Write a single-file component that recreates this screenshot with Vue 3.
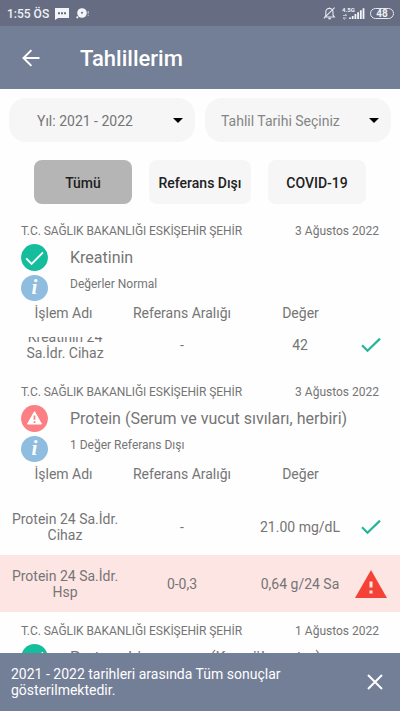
<script setup>
import { ref } from 'vue'

const tabs = ['Tümü', 'Referans Dışı', 'COVID-19']
const activeTab = ref('Tümü')
const showNotice = ref(true)

const source = 'T.C. SAĞLIK BAKANLIĞI ESKİŞEHİR ŞEHİR'

const results = [
  {
    id: 1,
    date: '3 Ağustos 2022',
    title: 'Kreatinin',
    summary: 'Değerler Normal',
    normal: true,
    compact: true,
    rows: [{ name: 'Kreatinin 24 Sa.İdr. Cihaz', range: '-', value: '42', normal: true }],
  },
  {
    id: 2,
    date: '3 Ağustos 2022',
    title: 'Protein (Serum ve vucut sıvıları, herbiri)',
    summary: '1 Değer Referans Dışı',
    normal: false,
    rows: [
      { name: 'Protein 24 Sa.İdr. Cihaz', range: '-', value: '21.00 mg/dL', normal: true },
      { name: 'Protein 24 Sa.İdr. Hsp', range: '0-0,3', value: '0,64 g/24 Sa', normal: false },
    ],
  },
  {
    id: 3,
    date: '1 Ağustos 2022',
    title: 'Protrombin zamanı (Koagülometre)',
    normal: true,
  },
]
</script>

<template>
  <div class="screen">
    <div class="status-bar">
      <span class="clock">1:55 ÖS</span>
      <svg class="chat-icon" viewBox="0 0 14 12">
        <path d="M0 0h14v10H3l-3 2z" fill="#f4f5f8" />
        <path d="M3 4.2h2v2H3zM6 4.2h2v2H6zM9 4.2h2v2H9z" fill="#666d82" />
      </svg>
      <svg class="bubble-icon" viewBox="0 0 14 12">
        <circle cx="6" cy="5" r="4.8" fill="#f4f5f8" />
        <circle cx="1.3" cy="9.3" r="1.1" fill="#f4f5f8" />
        <circle cx="6" cy="4.8" r="1" fill="#666d82" />
        <path d="M12.2 3v3M12.2 7v1" stroke="#c5c9d4" />
      </svg>
      <span class="spacer"></span>
      <svg class="bell-icon" viewBox="0 0 13 13" fill="none" stroke="#e6e8ee" stroke-width="1.1">
        <path d="M2 10h9.4L10 8.2V5a3.6 3.6 0 0 0-7.2 0v3.2zM6.5 1.5V.4M.8 11.4 11.6.6" />
        <path d="M5.3 11.5h2.6" stroke-width="1.6" />
      </svg>
      <div class="network">
        <span class="network-type">4.5G</span>
        <svg class="signal-icon" viewBox="0 0 23 13">
          <path d="M1 8.5h3.5M1 11h3.5M3 7l2 1.5M3 12.5 1 11" stroke="#d3d7e0" stroke-width=".8" fill="none" />
          <path
            d="M8 10.5V12M10.7 9v3M13.4 7v5M16.1 5.2V12M18.8 3.2V12M21.5 1.2V12"
            stroke="#f4f5f8"
            stroke-width="1.8"
          />
        </svg>
      </div>
      <div class="battery"><span>48</span></div>
    </div>

    <header class="app-bar">
      <svg class="back-icon" viewBox="0 0 18 18" fill="none" stroke="#fff" stroke-width="2">
        <path d="M17.5 9H1.8M9.4 1.1 1.5 9l7.9 7.9" />
      </svg>
      <h1>Tahlillerim</h1>
    </header>

    <div class="filters">
      <button type="button" class="select year">
        <span>Yıl: 2021 - 2022</span>
        <i class="caret"></i>
      </button>
      <button type="button" class="select date">
        <span>Tahlil Tarihi Seçiniz</span>
        <i class="caret"></i>
      </button>
    </div>

    <nav class="tabs">
      <button
        v-for="tab in tabs"
        :key="tab"
        type="button"
        class="tab"
        :class="{ active: tab === activeTab }"
        @click="activeTab = tab"
      >
        {{ tab }}
      </button>
    </nav>

    <main class="results">
      <section v-for="result in results" :key="result.id" class="result">
        <div class="source-line">
          <span class="source">{{ source }}</span>
          <span class="result-date">{{ result.date }}</span>
        </div>
        <div class="title-line">
          <svg v-if="result.normal" class="badge" viewBox="0 0 27 27">
            <circle cx="13.5" cy="13.5" r="13.4" fill="#14bd9c" />
            <path d="m5.2 14.4 5.4 5.4L22 8.4" fill="none" stroke="#fff" stroke-width="1.9" />
          </svg>
          <svg v-else class="badge" viewBox="0 0 27 27">
            <circle cx="13.5" cy="13.5" r="13.4" fill="#fc7f84" />
            <path d="M13.5 6.6 20.5 19H6.5z" fill="#fff" stroke="#fff" stroke-linejoin="round" />
            <path d="M13.5 10.5v4.3M13.5 16.2v1.9" stroke="#fc7f84" stroke-width="1.7" />
          </svg>
          <h2>{{ result.title }}</h2>
        </div>
        <template v-if="result.rows">
          <div class="summary-line">
            <span class="info">i</span>
            <span class="summary">{{ result.summary }}</span>
          </div>
          <div class="columns">
            <span>İşlem Adı</span>
            <span>Referans Aralığı</span>
            <span>Değer</span>
          </div>
          <div class="rows" :class="{ compact: result.compact }">
            <div v-for="row in result.rows" :key="row.name" class="row" :class="{ alert: !row.normal }">
              <span class="name">{{ row.name }}</span>
              <span>{{ row.range }}</span>
              <span class="value">{{ row.value }}</span>
              <svg v-if="row.normal" class="check-icon" viewBox="0 0 20 16">
                <path d="m1 8.3 5.5 5.4L19 1.6" fill="none" stroke="#25b598" stroke-width="2.2" />
              </svg>
              <svg v-else class="alert-icon" viewBox="0 0 32 28">
                <path d="M16 0 32 28H0z" fill="#f44336" />
                <path d="M16 11.5v6M16 20.5v3" stroke="#fde5e4" stroke-width="3" />
              </svg>
            </div>
          </div>
        </template>
      </section>
    </main>

    <div v-if="showNotice" class="notice">
      <p>2021 - 2022 tarihleri arasında Tüm sonuçlar gösterilmektedir.</p>
      <button type="button" class="close-btn" aria-label="Kapat" @click="showNotice = false">
        <svg viewBox="0 0 16 16" fill="none" stroke="#fff" stroke-width="2">
          <path d="m1 1 14 14M15 1 1 15" />
        </svg>
      </button>
    </div>
  </div>
</template>

<style>
body {
  margin: 0;
  background: #fefefe;
}
</style>

<style scoped>
.screen {
  display: flex;
  flex-direction: column;
  width: 400px;
  height: 711px;
  overflow: hidden;
  background: #fefefe;
  color: #757575;
  font-family: Roboto, 'Noto Sans', sans-serif;
}

button {
  padding: 0;
  border: 0;
  font: inherit;
}

.status-bar {
  display: flex;
  flex: none;
  align-items: center;
  box-sizing: border-box;
  height: 26px;
  padding: 1px 6px 0 7px;
  background: #666d82;
  color: #f0f1f5;
}

.clock {
  width: 48px;
  font-size: 12px;
  font-weight: 500;
  white-space: nowrap;
}

.chat-icon {
  width: 14px;
  height: 12px;
}

.bubble-icon {
  width: 14px;
  height: 12px;
  margin-left: 7px;
}

.spacer {
  flex: 1;
}

.bell-icon {
  width: 13px;
  height: 13px;
}

.network {
  display: grid;
  margin: 0 5px 0 6px;
}

.network-type,
.signal-icon {
  grid-area: 1 / 1;
}

.network-type {
  margin-top: -1px;
  font-size: 6px;
  font-weight: 700;
  line-height: 7px;
}

.signal-icon {
  width: 23px;
  height: 13px;
}

.battery {
  display: flex;
  align-items: center;
  justify-content: center;
  box-sizing: border-box;
  width: 24px;
  height: 11px;
  border: 1px solid #e6e8ee;
  border-radius: 6px;
  font-size: 10px;
  font-weight: 700;
}

.app-bar {
  display: flex;
  flex: none;
  align-items: center;
  box-sizing: border-box;
  height: 63px;
  padding: 0 22px;
  background: #737e97;
  color: #fff;
}

.back-icon {
  width: 18px;
  height: 18px;
}

h1 {
  margin: 2px 0 0 40px;
  font-size: 22px;
  font-weight: 500;
}

.filters {
  display: flex;
  flex: none;
  gap: 10px;
  padding: 9px 9px 0;
}

.select {
  display: flex;
  align-items: center;
  justify-content: space-between;
  box-sizing: border-box;
  width: 186px;
  height: 44px;
  padding: 1px 12px 0 28px;
  border-radius: 17px;
  background: #f6f6f6;
  color: #858585;
  font-size: 14px;
  white-space: nowrap;
}

.select.year {
  color: #757575;
}

.select.date {
  padding-left: 16px;
}

.caret {
  border: 5.5px solid transparent;
  border-top-color: #000;
  border-bottom: 0;
}

.tabs {
  display: flex;
  flex: none;
  justify-content: space-between;
  padding: 18px 34px 8px;
}

.tab {
  width: 98px;
  height: 44px;
  padding-top: 2px;
  border-radius: 8px;
  background: #f6f6f6;
  color: #212121;
  font-size: 14px;
  font-weight: 500;
}

.tab:nth-child(2) {
  width: 102px;
}

.tab.active {
  background: #b5b5b5;
}

.results {
  flex: 1;
  min-height: 0;
  overflow: hidden;
}

.source-line {
  display: flex;
  align-items: center;
  justify-content: space-between;
  height: 20px;
  padding: 9px 21px 3px;
  font-size: 12px;
}

.source {
  letter-spacing: -0.07px;
}

.title-line,
.summary-line {
  display: flex;
  align-items: center;
  padding-left: 21px;
}

.title-line {
  height: 27px;
}

.badge {
  width: 27px;
  height: 27px;
}

h2 {
  margin: 0 0 0 22px;
  font-size: 16px;
  font-weight: 400;
}

.summary-line {
  height: 26px;
  margin-top: 4px;
}

.info {
  width: 27px;
  height: 26px;
  border-radius: 50%;
  background: #8fbde0;
  color: #fff;
  font: italic bold 21px/25px 'Liberation Serif', serif;
  text-align: center;
}

.summary {
  margin: -8px 0 0 22px;
  font-size: 12px;
}

.columns {
  display: grid;
  grid-template-columns: 127px 110px 127px;
  height: 36px;
  font-size: 14px;
  line-height: 24px;
  text-align: center;
}

.rows.compact {
  display: flex;
  flex-direction: column;
  justify-content: flex-end;
  height: 36px;
  overflow: hidden;
}

.row {
  display: grid;
  flex: none;
  grid-template-columns: 130px 104px 118px 38px;
  align-items: center;
  height: 57px;
  font-size: 14px;
  line-height: 16px;
  text-align: center;
}

.row.alert {
  background: #fde5e4;
}

.name {
  padding: 0 10px;
}

.value {
  padding-left: 14px;
}

.row svg {
  justify-self: center;
}

.check-icon {
  width: 20px;
  height: 16px;
}

.alert-icon {
  width: 32px;
  height: 28px;
}

.notice {
  display: flex;
  flex: none;
  align-items: center;
  justify-content: space-between;
  box-sizing: border-box;
  height: 58px;
  padding: 0 17px 0 11px;
  background: #737e97;
  color: #fff;
}

.notice p {
  width: 290px;
  margin: 0;
  font-size: 14px;
  line-height: 16.5px;
}

.close-btn {
  display: flex;
  background: none;
}

.close-btn svg {
  width: 16px;
  height: 16px;
}
</style>
